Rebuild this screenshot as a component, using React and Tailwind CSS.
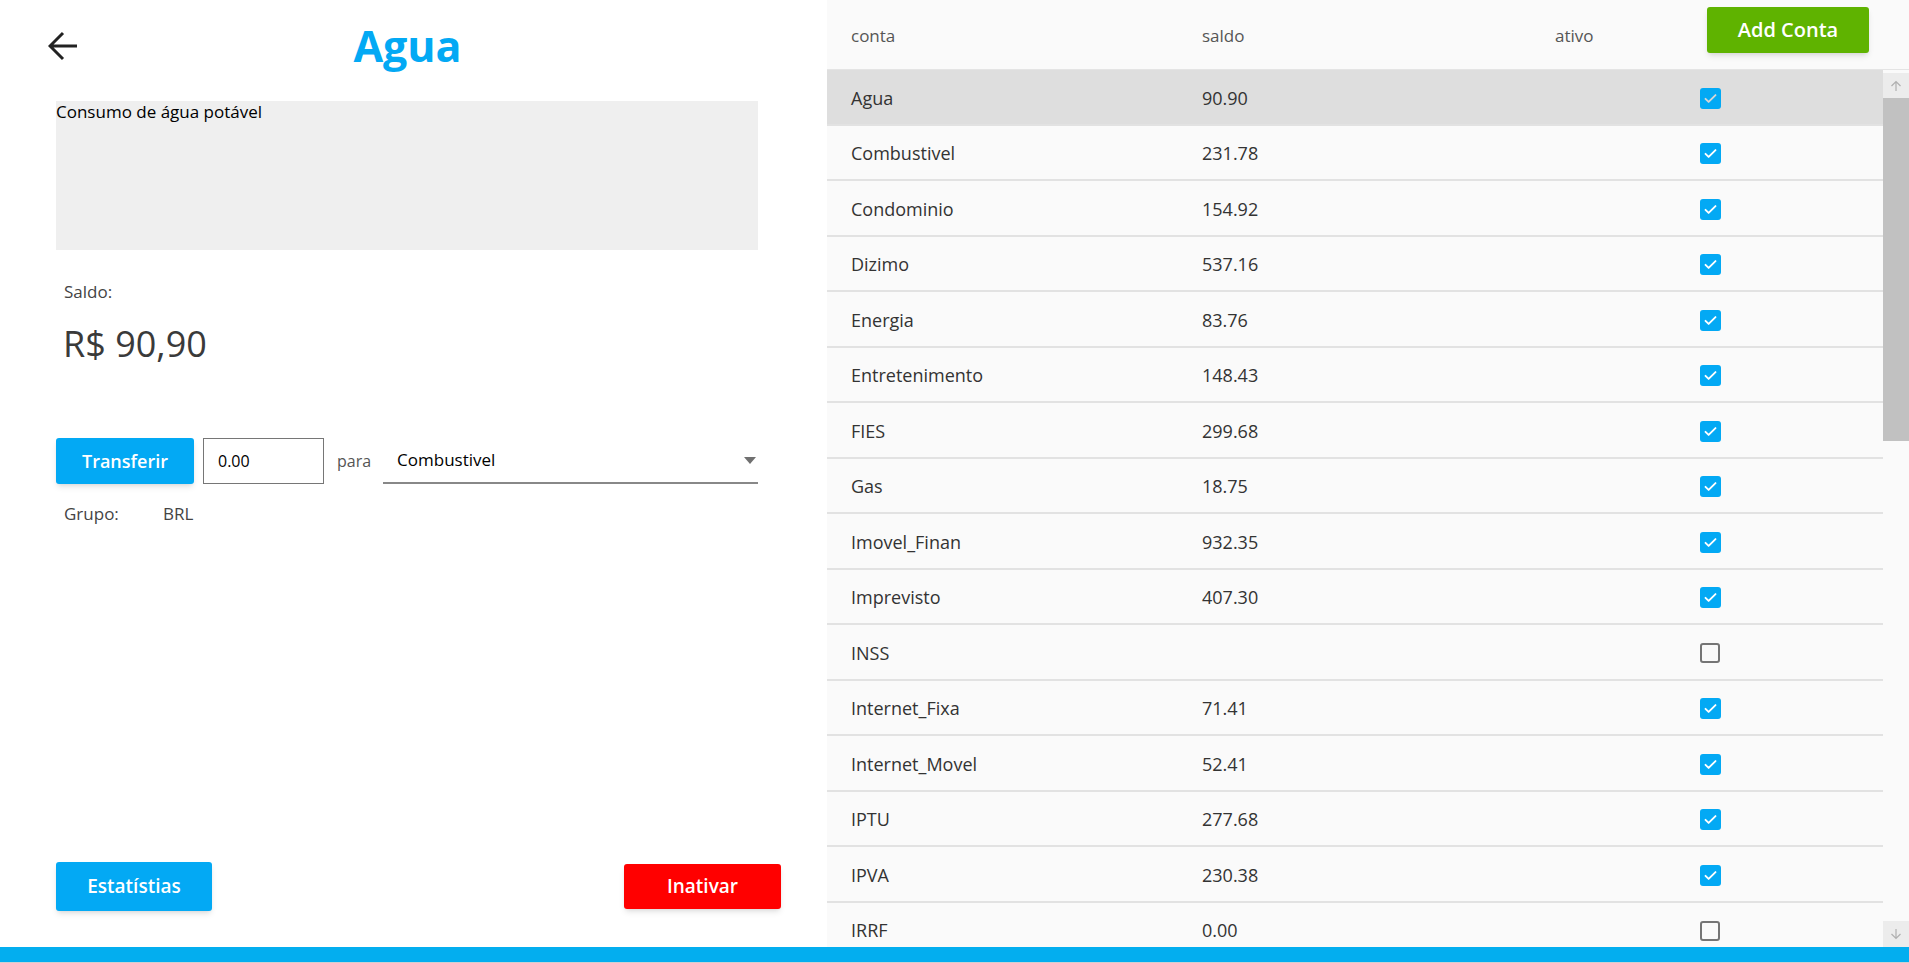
import React from 'react'

const contas = [
  { nome: 'Agua', saldo: '90.90', ativo: true, selected: true },
  { nome: 'Combustivel', saldo: '231.78', ativo: true },
  { nome: 'Condominio', saldo: '154.92', ativo: true },
  { nome: 'Dizimo', saldo: '537.16', ativo: true },
  { nome: 'Energia', saldo: '83.76', ativo: true },
  { nome: 'Entretenimento', saldo: '148.43', ativo: true },
  { nome: 'FIES', saldo: '299.68', ativo: true },
  { nome: 'Gas', saldo: '18.75', ativo: true },
  { nome: 'Imovel_Finan', saldo: '932.35', ativo: true },
  { nome: 'Imprevisto', saldo: '407.30', ativo: true },
  { nome: 'INSS', saldo: '', ativo: false },
  { nome: 'Internet_Fixa', saldo: '71.41', ativo: true },
  { nome: 'Internet_Movel', saldo: '52.41', ativo: true },
  { nome: 'IPTU', saldo: '277.68', ativo: true },
  { nome: 'IPVA', saldo: '230.38', ativo: true },
  { nome: 'IRRF', saldo: '0.00', ativo: false },
]

function Checkbox({ checked, dim }) {
  if (!checked) {
    return <div className="h-[20px] w-[20px] rounded-[3px] border-2 border-[#757575]" />
  }
  return (
    <div className="flex h-[21px] w-[21px] items-center justify-center rounded-[3px] bg-[#03a9f4]">
      <svg width="15" height="15" viewBox="0 0 24 24" fill="none">
        <path d="M4 12.5l5 5L20 6.5" stroke={dim ? '#d6d6d6' : '#ffffff'} strokeWidth="3" strokeLinecap="round" strokeLinejoin="round" />
      </svg>
    </div>
  )
}

function ContaRow({ conta }) {
  return (
    <div
      className={`flex h-[55.5px] shrink-0 items-center border-b-2 border-[#e2e2e2] pl-[24px] pt-[3px] text-[18px] text-[#333] ${
        conta.selected ? 'bg-[#dedede]' : 'bg-[#fafafa]'
      }`}
    >
      <div className="w-[351px]">{conta.nome}</div>
      <div className="w-[498px]">{conta.saldo}</div>
      <Checkbox checked={conta.ativo} dim={conta.selected} />
    </div>
  )
}

export default function App() {
  return (
    <div className="flex h-screen w-full flex-col overflow-hidden bg-white font-['Open_Sans',sans-serif]">
      <div className="flex min-h-0 flex-1">
        {/* Detalhe da conta */}
        <div className="flex w-[827px] shrink-0 flex-col">
          <div className="flex h-[92px] items-center">
            <svg className="ml-[48px]" width="30" height="30" viewBox="0 0 30 30" fill="none">
              <path d="M29 15H3M15 2L2 15l13 13" stroke="#222" strokeWidth="3" />
            </svg>
            <h1 className="flex-1 pr-[90px] text-center text-[43px] font-bold text-[#03a9f4]">Agua</h1>
          </div>

          <div className="ml-[56px] mt-[9px] h-[149px] w-[702px] bg-[#efefef] text-[17px] leading-[22px] text-black">
            Consumo de água potável
          </div>

          <div className="ml-[64px] mt-[29px] text-[17px] text-[#444]">Saldo:</div>
          <div className="ml-[63px] mt-[17px] text-[36px] leading-[44px] text-[#3a3a3a]">R$ 90,90</div>

          <div className="ml-[56px] mt-[72px] flex h-[47px] items-center">
            <button className="h-[46px] w-[138px] rounded-[3px] bg-[#03a9f4] text-[18px] font-semibold text-white shadow-md">
              Transferir
            </button>
            <div className="ml-[9px] flex h-[46px] w-[121px] items-center border border-[#767676] pl-[14px] text-[16px] text-black">
              0.00
            </div>
            <span className="ml-[13px] text-[16px] text-[#555]">para</span>
            <div className="ml-[12px] flex h-[46px] w-[375px] items-center justify-between border-b-2 border-[#888] pl-[14px] pr-[2px] text-[17px] text-black">
              <span>Combustivel</span>
              <svg width="12" height="7" viewBox="0 0 12 7">
                <path d="M0 0h12L6 7z" fill="#707070" />
              </svg>
            </div>
          </div>

          <div className="ml-[64px] mt-[16px] flex text-[17px] text-[#444]">
            <span className="w-[99px]">Grupo:</span>
            <span>BRL</span>
          </div>

          <div className="mt-auto flex items-center justify-between pb-[36px] pl-[56px] pr-[46px]">
            <button className="h-[49px] w-[156px] rounded-[3px] bg-[#03a9f4] text-[19px] font-semibold text-white shadow-md">
              Estatístias
            </button>
            <button className="h-[45px] w-[157px] rounded-[3px] bg-[#ff0000] text-[19px] font-semibold text-white shadow-md">
              Inativar
            </button>
          </div>
        </div>

        {/* Lista de contas */}
        <div className="flex min-w-0 flex-1 flex-col bg-[#fafafa]">
          <div className="flex h-[70px] shrink-0 items-start border-b border-[#e4e4e4] pl-[24px] text-[17px] text-[#555]">
            <div className="mt-[23px] w-[351px]">conta</div>
            <div className="mt-[23px] w-[353px]">saldo</div>
            <div className="mt-[23px] w-[152px]">ativo</div>
            <button className="mt-[7px] h-[46px] w-[162px] rounded-[3px] bg-[#5fb300] text-[20px] font-semibold text-white shadow-md">
              Add Conta
            </button>
          </div>

          <div className="flex min-h-0 flex-1">
            <div className="flex min-w-0 flex-1 flex-col overflow-hidden">
              {contas.map(c => (
                <ContaRow key={c.nome} conta={c} />
              ))}
            </div>
            <div className="flex w-[26px] shrink-0 flex-col bg-[#fafafa]">
              <div className="mt-[3px] flex h-[25px] items-center justify-center bg-[#ececec]">
                <svg width="12" height="12" viewBox="0 0 12 12" fill="none">
                  <path d="M6 11V1.5M1.5 6L6 1.5 10.5 6" stroke="#b0b0b0" strokeWidth="1.2" />
                </svg>
              </div>
              <div className="h-[343px] bg-[#c1c1c1]" />
              <div className="flex-1" />
              <div className="flex h-[26px] items-center justify-center bg-[#ececec]">
                <svg width="12" height="12" viewBox="0 0 12 12" fill="none">
                  <path d="M6 1v9.5M1.5 6L6 10.5 10.5 6" stroke="#b0b0b0" strokeWidth="1.2" />
                </svg>
              </div>
            </div>
          </div>
        </div>
      </div>
      <div className="h-[15px] shrink-0 bg-[#03aeef]" />
      <div className="h-px shrink-0 bg-[#d0d0d0]" />
    </div>
  )
}
